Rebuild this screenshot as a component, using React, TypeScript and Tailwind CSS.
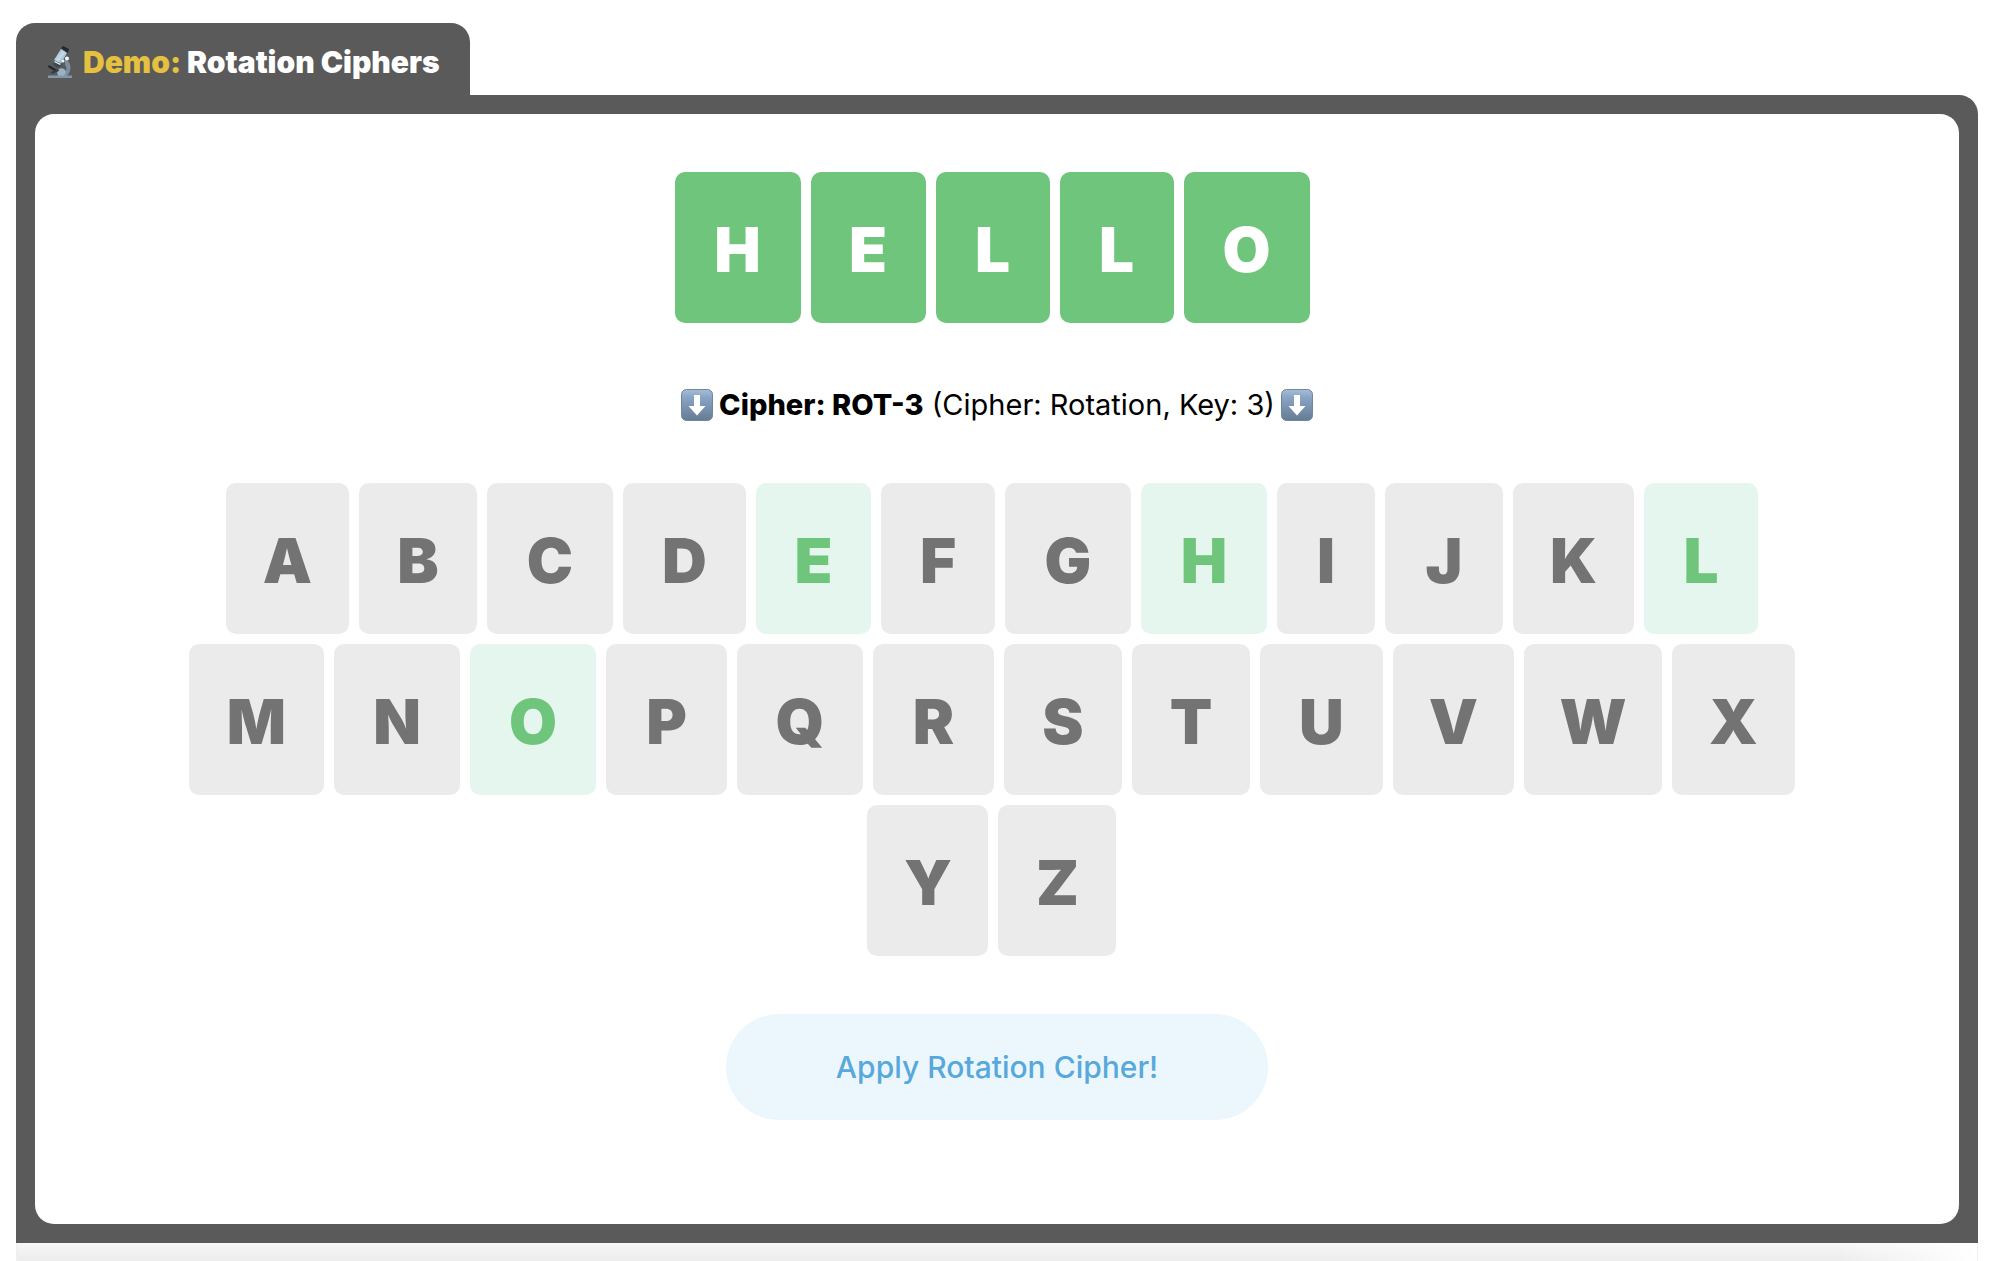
const tileWidths: Record<string, string> = {
  I: "w-[98px]",
  F: "w-[114px]",
  L: "w-[114px]",
  E: "w-[115px]",
  B: "w-[118px]",
  J: "w-[118px]",
  S: "w-[118px]",
  T: "w-[118px]",
  Z: "w-[118px]",
  K: "w-[121px]",
  P: "w-[121px]",
  R: "w-[121px]",
  V: "w-[121px]",
  Y: "w-[121px]",
  A: "w-[123px]",
  D: "w-[123px]",
  U: "w-[123px]",
  X: "w-[123px]",
  C: "w-[126px]",
  G: "w-[126px]",
  H: "w-[126px]",
  N: "w-[126px]",
  O: "w-[126px]",
  Q: "w-[126px]",
  M: "w-[135px]",
  W: "w-[138px]",
};

const tones = {
  solid: "bg-[#6fc57b] text-white",
  active: "bg-[#e5f6ee] text-[#6fc57b]",
  idle: "bg-[#ebebeb] text-[#737373]",
};

const word = "HELLO";
const alphabet = "ABCDEFGHIJKLMNOPQRSTUVWXYZ";

function Tile({ letter, tone }: { letter: string; tone: keyof typeof tones }) {
  return (
    <li
      className={`mr-2.5 mb-2.5 flex h-[151px] items-center justify-center rounded-[10px] pt-1 text-[62px] leading-none font-black ${tileWidths[letter]} ${tones[tone]}`}
    >
      {letter}
    </li>
  );
}

function Microscope() {
  return (
    <svg viewBox="0 0 24 32" className="h-8 w-6 shrink-0" aria-hidden="true">
      <defs>
        <linearGradient id="tube" x1="0" x2="1" y1="0" y2="1">
          <stop offset="0" stopColor="#86a5ba" />
          <stop offset="0.5" stopColor="#c3dcec" />
          <stop offset="1" stopColor="#5d7587" />
        </linearGradient>
      </defs>
      <path d="M17 13c7 3 7 12 2 17h-9l3-3c5 0 7-4 4-8z" fill="#7890a1" />
      <path d="M9 26c1-5 8-5 9 0l-2 4h-6z" fill="#9bb1c0" />
      <path d="M1 19l8 5-1 2-8-5z" fill="#20272c" />
      <path d="M3 26l7-3 1 2-7 3z" fill="#353e45" />
      <path d="M0 29.500h24V32H0z" fill="#7f98aa" />
      <path d="M13 3l6 4-6 11c-2 3-9 0-7-4z" fill="url(#tube)" />
      <path d="M6 14l8 4-2 3c-3 1-6-1-7-3z" fill="#394852" />
      <path d="M7 15l6 3-1 1-6-3z" fill="#dcebf4" />
      <path d="M13 2l2-2 6 3-1 4z" fill="#22282d" />
      <circle cx="15" cy="15" r="1.500" fill="#edf5fa" />
      <circle cx="19" cy="12.500" r="2" fill="#f4f8fb" />
    </svg>
  );
}

function DownArrow({ id }: { id: string }) {
  return (
    <svg viewBox="0 0 32 32" className="size-8 shrink-0" aria-hidden="true">
      <defs>
        <linearGradient id={id} x1="0" x2="0" y1="0" y2="1">
          <stop offset="0" stopColor="#a9bdd4" />
          <stop offset="0.250" stopColor="#89a5c6" />
          <stop offset="1" stopColor="#657b94" />
        </linearGradient>
      </defs>
      <rect x="0.500" y="0.500" width="31" height="31" rx="5" fill={`url(#${id})`} stroke="#6f86a0" />
      <path d="M13 6h6v11h5.500L16 26.500 7.500 17H13z" fill="#fff" />
    </svg>
  );
}

export default function App() {
  return (
    <div className="flex min-h-screen flex-col bg-white pt-[23px] font-['Inter',sans-serif] text-black">
      <main className="mr-[23px] ml-4 flex flex-1 flex-col">
        <h1 className="flex h-[72px] items-center gap-[11px] self-start rounded-t-[19px] bg-[#5a5a5a] pr-[30px] pl-8 pt-1.5 text-[30px] font-black text-white">
          <Microscope />
          <span>
            <span className="text-[#e5c13f]">Demo:</span> Rotation Ciphers
          </span>
        </h1>
        <section className="rounded-tr-[19px] bg-[#5a5a5a] p-[19px]">
          <div className="flex flex-col items-center rounded-[19px] bg-white pt-[58px] pb-[104px]">
            <ul className="flex flex-wrap justify-center" aria-label="Message">
              {word.split("").map((letter, i) => (
                <Tile key={i} letter={letter} tone="solid" />
              ))}
            </ul>
            <p className="mt-[48px] mb-[54px] flex h-12 items-center gap-1.5 text-[29px]">
              <DownArrow id="arrow-left" />
              <span>
                <strong className="font-extrabold">Cipher: ROT-3</strong> (Cipher: Rotation, Key: 3)
              </span>
              <DownArrow id="arrow-right" />
            </p>
            <ul className="flex w-[85%] flex-wrap justify-center" aria-label="Alphabet">
              {alphabet.split("").map((letter) => (
                <Tile key={letter} letter={letter} tone={word.includes(letter) ? "active" : "idle"} />
              ))}
            </ul>
            <button
              type="button"
              className="mt-12 h-[106px] cursor-pointer rounded-full bg-[#ebf7fc] px-[110px] text-[30px] font-medium text-[#58a8dc]"
            >
              Apply Rotation Cipher!
            </button>
          </div>
        </section>
        <div className="flex min-h-[18px] flex-1 justify-end border-x border-[#efefef] bg-linear-to-b from-[#f7f7f7] to-[#ececec]">
          <div className="w-[140px] bg-linear-to-r from-transparent to-white" />
        </div>
      </main>
    </div>
  );
}
